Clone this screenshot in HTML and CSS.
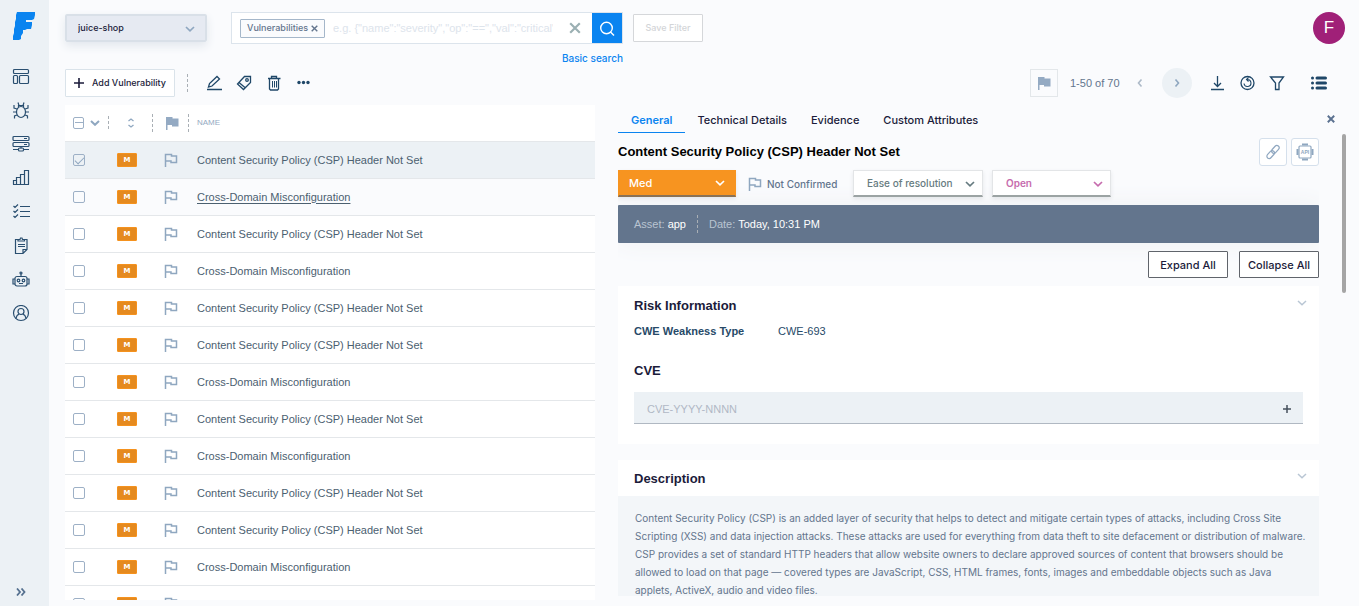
FILE: index.html
```
<!DOCTYPE html>
<html lang="en">
<head>
<meta charset="utf-8">
<title>Vulnerabilities</title>
<link rel="stylesheet" href="styles.css">
</head>
<body>
<svg class="defs" aria-hidden="true">
  <symbol id="chev" viewBox="0 0 10 6"><path d="M1 1l4 3.800L9 1"/></symbol>
  <symbol id="flag" viewBox="0 0 14 14"><path d="M1.500 14V1.500H7.500V3H12.500V9.500H7V8H1.500"/></symbol>
  <symbol id="flagfill" viewBox="0 0 14 14"><path d="M1 14V1h6.500v1.500H13.500V10.500H7V9H2.500V14z"/></symbol>
  <symbol id="cross" viewBox="0 0 10 10"><path d="M1 1l8 8M9 1L1 9"/></symbol>
</svg>
<div class="app">
  <nav class="sidebar">
    <a href="#" class="logo" aria-label="Home"><svg width="22" height="28" viewBox="0 0 22 28"><path d="M4 0H22V3L21 7L19 8H13V10H19V13L18 17H14L12 18H10V21L8 24V27L6 28H0V24L1 21V17L2 14V10L3 7V3z"/></svg></a>
    <a href="#" aria-label="Dashboard"><svg width="18" height="18" viewBox="0 0 18 18"><rect x="1.500" y="2.500" width="15" height="4" rx="1"/><rect x="1.500" y="8.500" width="4" height="8" rx="1"/><rect x="7.500" y="8.500" width="9" height="8" rx="1"/></svg></a>
    <a href="#" aria-label="Vulnerabilities"><svg width="18" height="18" viewBox="0 0 18 18"><ellipse cx="9" cy="11" rx="4.500" ry="5.500"/><path d="M6.500 6V4.500h5V6M7 4.500L6 1.500M11 4.500L12 1.500M5 8L2 7V4M13 8l3-1V4M4.500 11H1M13.500 11H17M5 14l-2.500 1v2.500M13 14l2.500 1v2.500"/></svg></a>
    <a href="#" aria-label="Assets"><svg width="18" height="18" viewBox="0 0 18 18"><rect x="1" y="1.500" width="16" height="4" rx="1"/><rect x="1" y="7.500" width="16" height="4" rx="1"/><path d="M9 11.500v2M1 14.500h5M12 14.500h5M12 3.500h3M12 9.500h3"/><rect x="6.500" y="13" width="5" height="3" rx="1"/></svg></a>
    <a href="#" aria-label="Analytics"><svg width="18" height="18" viewBox="0 0 18 18"><path d="M1.500 15.500v-4h3v4M4.500 15.500v-7h4M8.500 15.500v-10h4M12.500 15.500v-14h4v14M4.500 11.500v-3M8.500 15.500v-10M4.500 15.500v-4M1 15.500h16"/></svg></a>
    <a href="#" aria-label="Tasks"><svg width="18" height="18" viewBox="0 0 18 18"><path d="M1.500 3l1.500 1.500L6 1.500M1.500 8l1.500 1.500L6 6.500M1.500 13l1.500 1.500L6 11.500M8 3.500h10M8 8.500h10M8 13.500h10"/></svg></a>
    <a href="#" aria-label="Reports"><svg width="18" height="18" viewBox="0 0 18 18"><path d="M6 2.500H3.500v14H11l4-4v-10h-2.500M6 4V2.500h2l.5-1.500h1.500l.5 1.500h2V4zM11 16.500v-4h4M6 7.500h7M6 9.500h7"/></svg></a>
    <a href="#" aria-label="Automation"><svg width="18" height="18" viewBox="0 0 18 18"><rect x="3" y="5.500" width="12" height="9.500" rx="2"/><path d="M9 5V2.500M3 8H1v5h2M15 8h2v5h-2M7 12.500h4"/><circle cx="9" cy="2" r="1"/><circle cx="6.500" cy="9.500" r="1.300"/><circle cx="11.500" cy="9.500" r="1.300"/></svg></a>
    <a href="#" aria-label="Users"><svg width="18" height="18" viewBox="0 0 18 18"><circle cx="9" cy="8" r="7.500"/><circle cx="9" cy="6.500" r="3"/><path d="M4 13.500c.5-3 2-4 3-4.300M14 13.500c-.5-3-2-4-3-4.300"/></svg></a>
    <button class="expand" aria-label="Expand menu"><svg width="10" height="8" viewBox="0 0 10 8"><path d="M1 .5l3 3.500-3 3.500M5.500 .5l3 3.500-3 3.500"/></svg></button>
  </nav>

  <main class="main">
    <header class="topbar">
      <div class="pick workspace">
        <select aria-label="Workspace"><option>juice-shop</option></select>
        <svg><use href="#chev"/></svg>
      </div>
      <div class="searchbox">
        <form class="search">
          <span class="chip">Vulnerabilities <button type="button" aria-label="Remove"><svg><use href="#cross"/></svg></button></span>
          <input type="text" aria-label="Search" placeholder='e.g. {"name":"severity","op":"==","val":"critical"}'>
          <button type="button" class="clear" aria-label="Clear"><svg><use href="#cross"/></svg></button>
          <button type="button" class="go" aria-label="Search"><svg width="16" height="16" viewBox="0 0 16 16"><circle cx="7.500" cy="8" r="5.800"/><path d="M11.500 12L15 15.500"/></svg></button>
        </form>
        <a href="#" class="basic">Basic search</a>
      </div>
      <button class="save">Save Filter</button>
      <button class="avatar">F</button>
    </header>

    <div class="toolbar">
      <button class="add"><svg width="10" height="10" viewBox="0 0 10 10"><path d="M5 0v10M0 5h10"/></svg>Add Vulnerability</button>
      <span class="dash"></span>
      <div class="tools">
        <button aria-label="Edit"><svg width="16" height="16" viewBox="0 0 16 16"><path d="M1 14.500h15M2.500 12l1-3.500L11 1.500l2.500 2.500L6 11z"/></svg></button>
        <button aria-label="Tag"><svg width="16" height="16" viewBox="0 0 16 16"><path d="M8.500 1.500H14.500V7.500L7.500 14.500 1.500 9zM3 7.500l6.500 5.500"/><circle cx="11" cy="5" r="1.300"/></svg></button>
        <button aria-label="Delete"><svg width="16" height="16" viewBox="0 0 16 16"><path d="M2 3.500h12.500M5.500 3.500V1.500h5v2M3.500 3.500V14l1 1h7l1-1V3.500"/><path stroke-width="1" d="M6.500 6v6.500M8.500 6v6.500M10.500 6v6.500"/></svg></button>
        <button aria-label="More"><svg width="16" height="16" viewBox="0 0 16 16"><g class="solid"><circle cx="3" cy="7.500" r="1.700"/><circle cx="7.500" cy="7.500" r="1.700"/><circle cx="12" cy="7.500" r="1.700"/></g></svg></button>
      </div>
      <button class="flagbox" aria-label="Confirmed only"><svg class="flagfill"><use href="#flagfill"/></svg></button>
      <span class="count">1-50 of 70</span>
      <button class="page" aria-label="Previous"><svg width="6" height="8" viewBox="0 0 6 8"><path d="M4.500 .5L1.500 4l3 3.500"/></svg></button>
      <button class="page next" aria-label="Next"><svg width="6" height="8" viewBox="0 0 6 8"><path d="M1.500 .5l3 3.500-3 3.500"/></svg></button>
      <div class="tools right">
        <button aria-label="Download"><svg width="16" height="16" viewBox="0 0 16 16"><path d="M8.500 1v10.500M5 8l3.500 3.500L12 8M2 14.500h13"/></svg></button>
        <button aria-label="Refresh"><svg width="16" height="16" viewBox="0 0 16 16"><circle cx="8.500" cy="8" r="6.500"/><path stroke-width="1.100" d="M8 4.500a3.500 3.500 0 1 1-3 4M9.500 2.500L7.500 4.500l2 2"/></svg></button>
        <button aria-label="Filter"><svg width="16" height="16" viewBox="0 0 16 16"><path d="M1.500 2h13L10 8v6.500H6.500V8z"/></svg></button>
      </div>
      <button class="cols" aria-label="Columns"><svg width="16" height="16" viewBox="0 0 16 16"><path d="M1.500 3h.01M6 3h8.500M1.500 8h.01M6 8h8.500M1.500 13h.01M6 13h8.500"/></svg></button>
    </div>

    <div class="split">
      <div class="list">
        <table>
          <thead><tr>
            <th class="c1"><div class="hcell"><input type="checkbox" class="mixed" aria-label="Select all"><svg class="hchev"><use href="#chev"/></svg><span class="dash"></span></div></th>
            <th class="c2"><svg width="8" height="10" viewBox="0 0 8 10"><path d="M1.500 3L4 1l2.500 2M1.500 7L4 9l2.500-2"/></svg></th>
            <th class="c3"><div class="hcell"><span class="dash"></span><svg class="flagfill"><use href="#flagfill"/></svg><span class="dash"></span></div></th>
            <th class="c4">NAME</th>
          </tr></thead>
          <tbody id="rows"></tbody>
        </table>
      </div>

      <section class="detail">
        <div class="tabs">
          <button class="on">General</button><button>Technical Details</button><button>Evidence</button><button>Custom Attributes</button>
          <button class="close" aria-label="Close"><svg><use href="#cross"/></svg></button>
        </div>
        <div class="scroller">
          <div class="content">
            <div class="titlebar">
              <h1>Content Security Policy (CSP) Header Not Set</h1>
              <button aria-label="Copy link"><svg width="16" height="16" viewBox="0 0 16 16"><g transform="rotate(-48 8 8)"><rect x="0" y="5.700" width="9" height="4.600" rx="2.300"/><rect x="7" y="5.700" width="9" height="4.600" rx="2.300"/></g></svg></button>
              <button aria-label="API"><svg width="18" height="18" viewBox="0 0 18 18"><rect x="3" y="3" width="12" height="12" rx="1"/><path stroke-width="2" d="M6 1.500h6M6 16.500h6M1.500 6v6M16.500 6v6"/><text x="9" y="11">API</text></svg></button>
            </div>
            <div class="status">
              <div class="pick med"><select aria-label="Severity"><option>Med</option></select><svg><use href="#chev"/></svg></div>
              <button class="confirm"><svg class="flag"><use href="#flag"/></svg>Not Confirmed</button>
              <div class="pick ease"><select aria-label="Ease of resolution"><option>Ease of resolution</option></select><svg><use href="#chev"/></svg></div>
              <div class="pick open"><select aria-label="Status"><option>Open</option></select><svg><use href="#chev"/></svg></div>
            </div>
            <div class="meta"><span><i>Asset:</i> app</span><span class="dash"></span><span><i>Date:</i> Today, 10:31 PM</span></div>
            <div class="actions"><button>Expand All</button><button>Collapse All</button></div>
            <article class="card risk">
              <header><h2>Risk Information</h2><button aria-label="Collapse"><svg><use href="#chev"/></svg></button></header>
              <dl><dt>CWE Weakness Type</dt><dd>CWE-693</dd></dl>
              <h2><label for="cve">CVE</label></h2>
              <div class="cve"><input id="cve" type="text" placeholder="CVE-YYYY-NNNN"><button aria-label="Add CVE"><svg width="8" height="8" viewBox="0 0 8 8"><path d="M4 0v8M0 4h8"/></svg></button></div>
            </article>
            <article class="card desc">
              <header><h2>Description</h2><button aria-label="Collapse"><svg><use href="#chev"/></svg></button></header>
              <p>Content Security Policy (CSP) is an added layer of security that helps to detect and mitigate certain types of attacks, including Cross Site Scripting (XSS) and data injection attacks. These attacks are used for everything from data theft to site defacement or distribution of malware. CSP provides a set of standard HTTP headers that allow website owners to declare approved sources of content that browsers should be allowed to load on that page — covered types are JavaScript, CSS, HTML frames, fonts, images and embeddable objects such as Java applets, ActiveX, audio and video files.</p>
            </article>
          </div>
          <div class="track"><div class="thumb"></div></div>
        </div>
      </section>
    </div>
  </main>
</div>
<script src="rows.js"></script>
</body>
</html>
```
FILE: styles.css
```
* { box-sizing: border-box; }
body { margin: 0; font: 11px/16px "Liberation Sans", Arial, sans-serif; color: #1b1b3a; background: #fafbfd; }
button, input, select { font: inherit; color: inherit; margin: 0; padding: 0; border: 0; background: none; border-radius: 0; }
button { cursor: pointer; display: flex; align-items: center; justify-content: center; flex: none; }
svg { display: block; fill: none; stroke: currentColor; flex: none; }
a { color: inherit; text-decoration: none; }
h1, h2, p, dl, dd { margin: 0; }
h1, h2 { font-size: 13px; line-height: 18px; font-weight: bold; }
.defs { position: absolute; width: 0; height: 0; }
.solid { fill: currentColor; stroke: none; }
.dash { border-left: 1px dashed #a9afb5; height: 18px; }
.flag, .flagfill { width: 14px; height: 14px; color: #8fa7c0; stroke-width: 1.5; }
.flagfill { fill: #94aac3; stroke: none; }
.workspace, .chip, .basic, .save, .add, .tabs, .status, .actions, .desc p { font-family: Inter, "Liberation Sans", sans-serif; font-size: 10px; font-weight: 500; }

.app { display: flex; height: 100vh; overflow: hidden; }
.sidebar { width: 49px; flex: none; background: #ecf1f5; color: #2a4f70; display: flex; flex-direction: column; align-items: center; gap: 16px; padding: 12px 7px 9px 0; stroke-width: 1.2; }
.sidebar .logo { padding: 0 0 11px 6px; }
.logo svg { fill: #0a84f0; stroke: none; }
.expand { margin-top: auto; color: #55708f; stroke-width: 1.8; height: 10px; }

.main { flex: 1; min-width: 0; display: flex; flex-direction: column; }
.topbar { display: flex; align-items: flex-start; padding: 12px 14px 0 16px; height: 69px; flex: none; }
.pick { position: relative; display: flex; }
.pick select { appearance: none; width: 100%; outline: 0; }
.pick svg { position: absolute; right: 11px; top: 10px; width: 10px; height: 6px; stroke-width: 1.7; pointer-events: none; }
.workspace { width: 142px; margin-top: 2px; height: 28px; box-shadow: 0 4px 10px #e2e7ed; font-weight: 400; }
.workspace select { background: #e6eaf2; border: 2px solid #d9e0e8; border-radius: 2px; padding: 0 11px; font-size: 9px; font-weight: 500; }
.pick.workspace svg { right: 12px; top: 12px; color: #8fa7c0; }
.searchbox { width: 392px; margin-left: 24px; }
.search { display: flex; align-items: center; height: 32px; border: 1px solid #dce4ec; background: #fff; padding-left: 8px; }
.chip { display: flex; align-items: center; justify-content: space-between; width: 85px; height: 19px; padding: 0 6px; border: 1px solid #a5b7ca; border-radius: 1px; background: #fafbfd; color: #63758d; white-space: nowrap; flex: none; font-size: 9px; }
.chip svg { width: 7px; height: 7px; stroke-width: 2; }
.search input { flex: 1; min-width: 0; margin-left: 8px; }
.search input::placeholder { color: #dde4ec; }
.clear { margin: 0 11px 0 16px; color: #9bb0b3; }
.clear svg { width: 12px; height: 12px; stroke-width: 1.8; }
.go { width: 30px; height: 30px; background: #0a84f0; color: #fff; stroke-width: 1.4; }
.basic { display: block; text-align: right; margin-top: 6px; color: #0a84f0; }
.save { width: 70px; height: 28px; margin: 2px 0 0 10px; border: 1px solid #d5d7da; border-radius: 1px; color: #d3d5d8; background: #fff; font-size: 9px; }
.avatar { width: 32px; height: 32px; border-radius: 50%; background: #a02078; color: #fff; font-size: 17px; margin-left: auto; }

.toolbar { display: flex; align-items: center; padding: 0 32px 0 16px; height: 28px; flex: none; color: #1f4768; }
.add { height: 28px; width: 110px; gap: 8px; border: 1px solid #dae3ea; border-radius: 1px; background: #fff; color: #1b1b3a; white-space: nowrap; font-size: 9px; }
.add svg { stroke-width: 1.6; }
.toolbar .dash { margin-left: 12px; }
.tools { display: flex; gap: 14px; margin-left: 18px; stroke-width: 1.3; }
.flagbox { width: 28px; height: 28px; border: 1px solid #e3e7ea; margin-left: auto; }
.count { margin-left: 12px; color: #63758d; width: 49px; white-space: nowrap; }
.page { width: 30px; height: 30px; margin-left: 6px; border-radius: 50%; color: #adbac8; stroke-width: 1.6; }
.next { background: #ecf1f5; margin-left: 7px; color: #8fa7c0; }
.tools.right { margin-left: 17px; }
.cols { margin-left: 26px; stroke-width: 3; stroke-linecap: round; }

.split { flex: 1; min-height: 0; display: grid; grid-template-columns: 530fr 741fr; column-gap: 23px; padding: 8px 0 6px 16px; }
.list { background: #fff; overflow: hidden; min-height: 0; }
table { width: 100%; border-collapse: collapse; table-layout: fixed; color: #4b6070; }
th, td { height: 37px; padding: 0; text-align: left; border-bottom: 1px solid #e4e7ea; white-space: nowrap; font-weight: normal; }
th { height: 36px; }
.c1 { width: 44px; padding-left: 8px; }
.c2 { width: 43px; }
th.c2 svg { margin: 0 auto; color: #8fa7c0; stroke-width: 1.3; }
.c3 { width: 45px; }
th.c4 { font-size: 8px; color: #94aac3; }
.hcell { display: flex; align-items: center; }
.c1 .dash { margin-left: 8px; height: 13px; }
.c3 .hcell { gap: 9px; }
.c3 .hcell .flagfill { margin-left: 3px; }
.hchev { width: 10px; height: 6px; margin-left: 6px; color: #8fa7c0; stroke-width: 2; }
input[type=checkbox] { appearance: none; display: grid; place-items: center; width: 12px; height: 12px; border: 1px solid #9db0c6; border-radius: 2px; }
.mixed::before { content: ""; width: 8px; height: 1px; background: #9db0c6; }
input:checked::before { content: ""; width: 8px; height: 4px; border: solid #8fa7c0; border-width: 0 0 1px 1px; transform: rotate(-45deg); }
.sev { display: block; width: 20px; height: 14px; margin-left: 8px; border: 1px solid #f5921e; border-radius: 1px; background: #e58a1f; color: #fff; font: bold 7px/12px "DejaVu Sans", sans-serif; text-align: center; }
td .flag { margin-left: 12px; }
.sel td { background: #ecf1f5; }
.hover td { background: #fafbfd; }
.hover a { text-decoration: underline; text-underline-offset: 2px; }

.detail { display: flex; flex-direction: column; min-width: 0; min-height: 0; }
.tabs { display: flex; height: 28px; padding-right: 24px; flex: none; font-size: 11px; }
.tabs button { padding: 2px 12px 0; border-bottom: 1px solid transparent; white-space: nowrap; }
.tabs .on { padding: 2px 13px 0; color: #0a84f0; font-weight: 600; border-color: #0a84f0; }
.tabs .close { margin-left: auto; padding: 1px 0 0; color: #5b7190; stroke-width: 2.4; }
.close svg { width: 8px; height: 8px; }
.scroller { flex: 1; min-height: 0; display: flex; gap: 23px; padding-bottom: 4px; }
.content { flex: 1; min-width: 0; overflow: hidden; padding-top: 5px; }
.titlebar { display: flex; align-items: center; gap: 4px; height: 28px; }
.titlebar h1 { flex: 1; color: #000; white-space: nowrap; }
.titlebar button { width: 28px; height: 28px; border: 1px solid #d5e0ec; border-radius: 3px; background: #fff; color: #8fa7c0; stroke-width: 1.2; }
.titlebar text { font: bold 5px "Liberation Sans", sans-serif; fill: currentColor; stroke: none; text-anchor: middle; }
.status { display: flex; align-items: center; margin-top: 4px; height: 27px; }
.status .pick { height: 27px; box-shadow: 0 2px 4px #e4e6e9; }
.status select { border: 1px solid #e3e5e7; border-bottom: 2px solid #9ba3a3; background: #fff; padding: 0 13px; }
.med { width: 118px; }
.status .med select { background: #f79420; border-color: #f79420; border-bottom-color: #8a7256; color: #fff; padding: 0 10px; font-size: 11px; }
.med svg { color: #fff; }
.confirm { gap: 5px; width: 92px; justify-content: flex-start; margin: 0 13px 0 12px; color: #63758d; white-space: nowrap; }
.ease { width: 130px; color: #667b80; }
.status .ease svg, .status .open svg { right: 8px; top: 11px; }
.open { width: 119px; margin-left: 9px; color: #c66bad; font-weight: 600; }
.meta { display: flex; align-items: center; gap: 11px; margin-top: 8px; height: 38px; padding: 0 16px; background: #63758d; border-radius: 1px; color: #fff; box-shadow: 0 0 24px #eef0f3; }
.meta i { font-style: normal; color: #b9c4d1; }
.actions { display: flex; justify-content: flex-end; gap: 11px; margin: 8px 0; font-size: 11px; }
.actions button { width: 80px; height: 27px; border: 1px solid #60646b; border-radius: 1px; background: #fff; }
.card { background: #fff; margin-bottom: 16px; }
.card header { display: flex; justify-content: space-between; }
.card header svg { width: 10px; height: 6px; color: #b9c6d4; stroke-width: 1.5; }
.card header button { height: 12px; }
.risk { padding: 11px 16px 20px; }
.risk header { margin-right: -4px; }
.risk dl { display: flex; margin: 8px 0 23px; color: #274a68; }
.risk dt { width: 144px; font-weight: bold; }
.cve { display: flex; margin-top: 12px; height: 32px; background: #ecf1f5; border-bottom: 1px solid #b0b8c2; padding: 2px 12px 0 13px; }
.cve input { flex: 1; }
.cve input::placeholder { color: #b1b8c5; }
.cve button { stroke-width: 1.5; color: #45505c; }
.desc header { padding: 10px 12px 8px 16px; }
.desc p { background: #f3f6f9; color: #63758d; line-height: 18px; padding: 13px 10px 18px 17px; font-weight: 400; }
.track { width: 17px; }
.thumb { width: 4px; height: 159px; margin: 1px 0 0; border-radius: 2px; background: #a5a5a5; }
```
FILE: rows.js
```
const csp = "Content Security Policy (CSP) Header Not Set";
const cdm = "Cross-Domain Misconfiguration";
const names = [csp, cdm, csp, cdm, csp, csp, cdm, csp, cdm, csp, csp, cdm, csp];
document.getElementById("rows").innerHTML = names.map((name, i) => `
  <tr class="${["sel", "hover"][i] || ""}">
    <td class="c1"><input type="checkbox" aria-label="Select ${name}" ${i === 0 ? "checked" : ""}></td>
    <td class="c2"><span class="sev">M</span></td>
    <td class="c3"><svg class="flag"><use href="#flag"/></svg></td>
    <td class="c4"><a href="#">${name}</a></td>
  </tr>`).join("");
```
